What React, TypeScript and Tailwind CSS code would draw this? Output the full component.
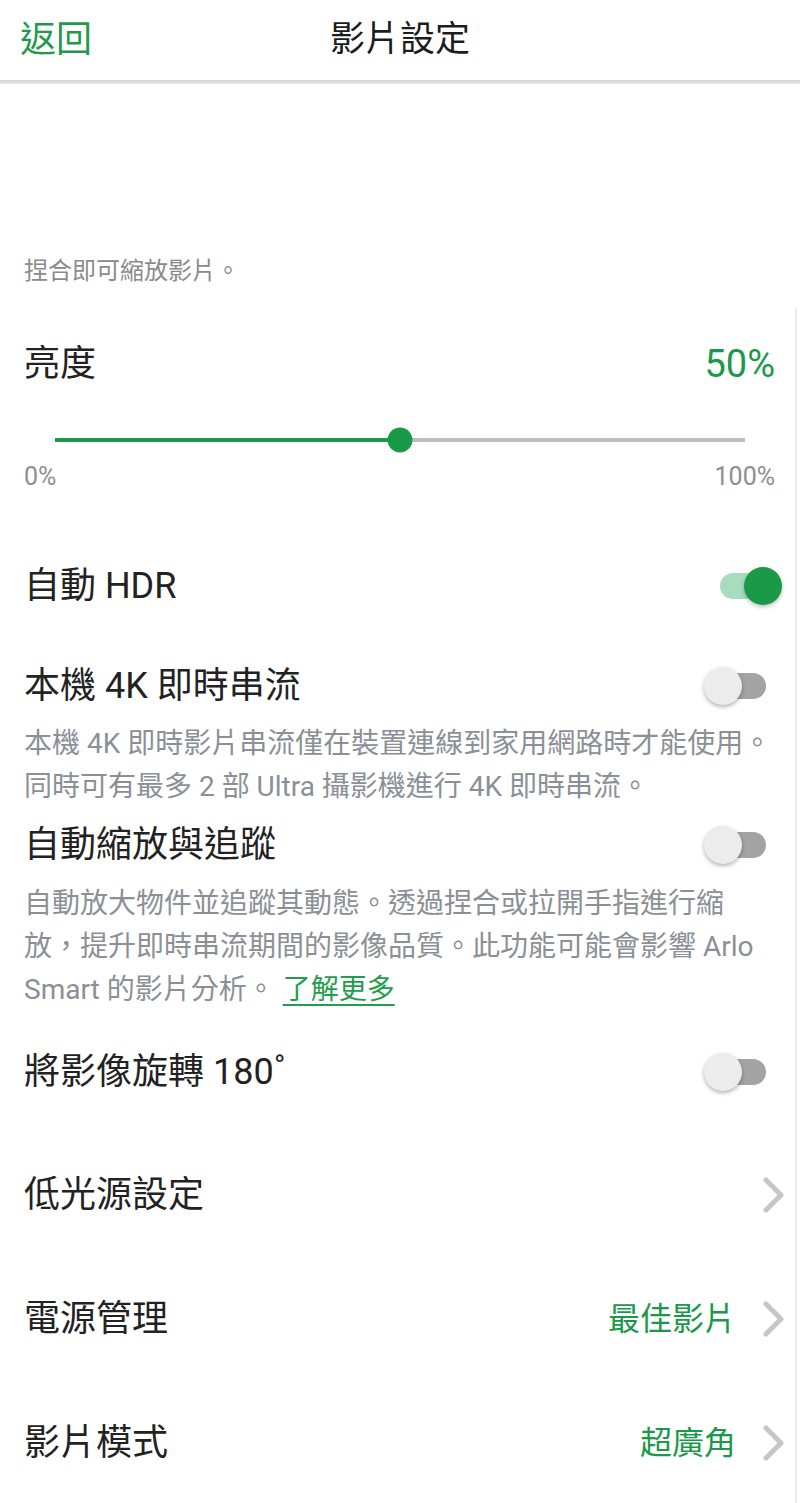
import { ReactNode } from "react";

const font = { fontFamily: 'Roboto, "Noto Sans CJK TC", "Noto Sans CJK SC", sans-serif' };

function Toggle({ on }: { on: boolean }) {
  return (
    <div className="relative w-[78px] h-[40px] shrink-0">
      {on ? (
        <>
          <div className="absolute top-[7px] left-[16px] right-[6px] h-[26px] rounded-full bg-[#a9dcbf]" />
          <div className="absolute top-[1px] right-0 w-[38px] h-[38px] rounded-full bg-[#1a9a48] shadow-[0_2px_4px_rgba(0,0,0,0.25)]" />
        </>
      ) : (
        <>
          <div className="absolute top-[7px] left-[10px] right-[16px] h-[26px] rounded-full bg-[#a3a3a3]" />
          <div className="absolute top-[1px] left-0 w-[38px] h-[38px] rounded-full bg-[#ececec] shadow-[0_2px_4px_rgba(0,0,0,0.3)]" />
        </>
      )}
    </div>
  );
}

function Chevron() {
  return (
    <svg width="22" height="36" viewBox="0 0 22 36" className="shrink-0">
      <polyline points="3,3 18,18 3,33" fill="none" stroke="#c6c6c6" strokeWidth="5" strokeLinecap="round" strokeLinejoin="round" />
    </svg>
  );
}

function ToggleRow({ label, on, h }: { label: string; on: boolean; h: string }) {
  return (
    <div className={`flex items-center justify-between pl-6 pr-[13px] ${h}`}>
      <span className="text-[36px] text-[#222]">{label}</span>
      <Toggle on={on} />
    </div>
  );
}

function Desc({ children }: { children: ReactNode }) {
  return <p className="pl-6 w-[774px] text-[28px] leading-[43px] text-[#8a9095]">{children}</p>;
}

function NavRow({ label, value }: { label: string; value?: string }) {
  return (
    <div className="flex items-center h-[124px] pl-6 pr-[10px]">
      <span className="text-[36px] text-[#222]">{label}</span>
      <span className="ml-auto mr-[27px] text-[32px] text-[#1a9a48]">{value}</span>
      <Chevron />
    </div>
  );
}

export default function App() {
  return (
    <div className="w-[800px] min-h-[1503px] bg-white overflow-hidden" style={font}>
      {/* header */}
      <div className="grid grid-cols-3 items-center h-[80px]">
        <span className="pl-5 text-[36px] text-[#1f9a4c]">返回</span>
        <span className="text-center text-[35px] text-[#1c1c1c]">影片設定</span>
        <span />
      </div>
      <div className="h-[4px] bg-gradient-to-b from-[#d4d4d4] to-[#e6e6e6]" />

      <div className="h-[166px]" />
      <div className="h-[42px] flex items-center pl-6 text-[24px] text-[#8a8a8a]">捏合即可縮放影片。</div>
      <div className="h-[16px]" />

      <div className="mr-[3px] border-r-2 border-[#ececec]">
        {/* brightness */}
        <div className="flex items-center justify-between h-[112px] pl-6 pr-[20px]">
          <span className="text-[36px] text-[#222]">亮度</span>
          <span className="text-[38px] text-[#1a9a48]">50%</span>
        </div>
        <div className="h-[40px] flex items-center pl-[55px] pr-[50px]">
          <div className="relative flex-1 h-[4px] bg-[#bdbdbd]">
            <div className="absolute left-0 top-0 h-[4px] w-1/2 bg-[#1a9a48]" />
            <div className="absolute left-1/2 top-1/2 -translate-x-1/2 -translate-y-1/2 w-[25px] h-[25px] rounded-full bg-[#1a9a48]" />
          </div>
        </div>
        <div className="h-[34px] flex items-center justify-between pl-6 pr-[20px] text-[25px] text-[#8e8e8e]">
          <span>0%</span>
          <span>100%</span>
        </div>

        <div className="h-[56px]" />
        <ToggleRow label="自動 HDR" on h="h-[72px]" />
        <div className="h-[28px]" />
        <ToggleRow label="本機 4K 即時串流" on={false} h="h-[72px]" />
        <Desc>本機 4K 即時影片串流僅在裝置連線到家用網路時才能使用。同時可有最多 2 部 Ultra 攝影機進行 4K 即時串流。</Desc>
        <ToggleRow label="自動縮放與追蹤" on={false} h="h-[74px]" />
        <Desc>
          自動放大物件並追蹤其動態。透過捏合或拉開手指進行縮放，提升即時串流期間的影像品質。此功能可能會影響 Arlo Smart 的影片分析。
          <span className="ml-[8px] text-[#1f9e4c] underline underline-offset-[5px]">了解更多</span>
        </Desc>
        <ToggleRow label="將影像旋轉 180˚" on={false} h="h-[122px]" />

        <NavRow label="低光源設定" />
        <NavRow label="電源管理" value="最佳影片" />
        <NavRow label="影片模式" value="超廣角" />
      </div>
    </div>
  );
}
